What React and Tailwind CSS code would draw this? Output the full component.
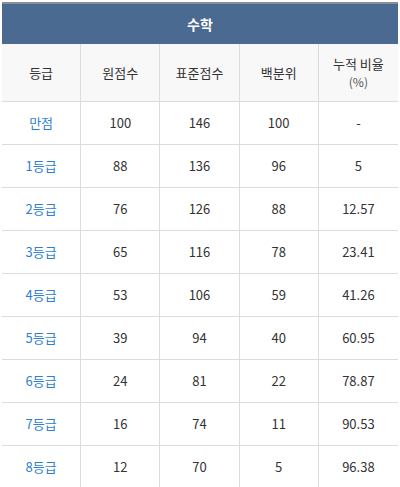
import React from "react";

const rows = [
  ["만점", "100", "146", "100", "-"],
  ["1등급", "88", "136", "96", "5"],
  ["2등급", "76", "126", "88", "12.57"],
  ["3등급", "65", "116", "78", "23.41"],
  ["4등급", "53", "106", "59", "41.26"],
  ["5등급", "39", "94", "40", "60.95"],
  ["6등급", "24", "81", "22", "78.87"],
  ["7등급", "16", "74", "11", "90.53"],
  ["8등급", "12", "70", "5", "96.38"],
];

export default function App() {
  return (
    <div className="bg-white px-[2px] pt-[2px] text-[13px] text-[#333] font-['Noto_Sans_CJK_KR','Noto_Sans',sans-serif]">
      <div className="border-t-2 border-[#8a8f96]">
        <div className="h-[40px] bg-[#4b6a91] text-white font-bold text-[14px] flex items-center justify-center">
          수학
        </div>
        <div className="grid grid-cols-5 h-[58px] bg-[#f8f8f8] border-b border-[#dcdcdc]">
          {["등급", "원점수", "표준점수", "백분위"].map((h) => (
            <div key={h} className="flex items-center justify-center border-r border-[#dcdcdc]">{h}</div>
          ))}
          <div className="flex flex-col items-center justify-center leading-[18px]">
            <span>누적 비율</span>
            <span className="text-[12px] text-[#555]">(%)</span>
          </div>
        </div>
        {rows.map((r) => (
          <div key={r[0]} className="grid grid-cols-5 h-[43px] border-b border-[#dcdcdc]">
            {r.map((c, i) => (
              <div
                key={i}
                className={`flex items-center justify-center ${i < 4 ? "border-r border-[#dcdcdc]" : ""} ${i === 0 ? "text-[#2f7fd0]" : ""}`}
              >
                {c}
              </div>
            ))}
          </div>
        ))}
      </div>
    </div>
  );
}
